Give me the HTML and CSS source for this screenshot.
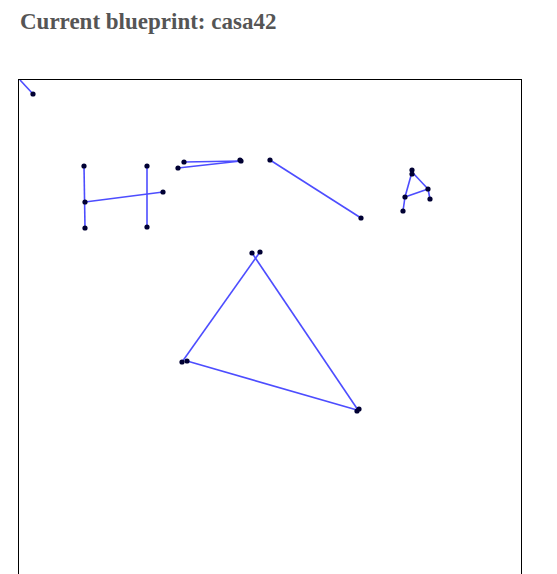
FILE: index.html
```html
<html><head><meta charset="UTF-8">
<meta name="viewport" content="width=device-width, initial-scale=1.0">
<title>Blueprint viewer</title>
<link rel="stylesheet" href="styles.css">
</head>
<body>
    <div class="viewer">
        <h2 class="title">Current blueprint: casa42</h2>
        <div class="board">
            <svg class="plan" width="500" height="500" viewBox="0 0 500 500" xmlns="http://www.w3.org/2000/svg">
                <g class="walls">
                    <line x1="1" y1="0" x2="14" y2="14"/>
                    <line x1="65" y1="86" x2="66" y2="148"/>
                    <line x1="128" y1="86" x2="128" y2="147"/>
                    <line x1="66" y1="122" x2="144" y2="112"/>
                    <line x1="165" y1="82" x2="222" y2="81"/>
                    <line x1="159" y1="88" x2="222" y2="81"/>
                    <line x1="251" y1="80" x2="342" y2="138"/>
                    <line x1="393" y1="92" x2="386" y2="117"/>
                    <line x1="386" y1="117" x2="384" y2="131"/>
                    <line x1="386" y1="117" x2="409" y2="109"/>
                    <line x1="393" y1="92" x2="409" y2="109"/>
                    <line x1="409" y1="109" x2="411" y2="119"/>
                    <line x1="163" y1="282" x2="241" y2="172"/>
                    <line x1="233" y1="173" x2="339" y2="330"/>
                    <line x1="168" y1="281" x2="338" y2="330"/>
                </g>
                <g class="joints">
                    <circle cx="14" cy="14" r="2.6"/>
                    <circle cx="65" cy="86" r="2.6"/>
                    <circle cx="66" cy="122" r="2.6"/>
                    <circle cx="66" cy="148" r="2.6"/>
                    <circle cx="128" cy="86" r="2.6"/>
                    <circle cx="128" cy="147" r="2.6"/>
                    <circle cx="144" cy="112" r="2.6"/>
                    <circle cx="165" cy="82" r="2.6"/>
                    <circle cx="159" cy="88" r="2.6"/>
                    <circle cx="222" cy="81" r="2.6"/>
                    <circle cx="221" cy="80" r="2.6"/>
                    <circle cx="251" cy="80" r="2.6"/>
                    <circle cx="342" cy="138" r="2.6"/>
                    <circle cx="393" cy="90" r="2.6"/>
                    <circle cx="393" cy="94" r="2.6"/>
                    <circle cx="386" cy="117" r="2.6"/>
                    <circle cx="384" cy="131" r="2.6"/>
                    <circle cx="409" cy="109" r="2.6"/>
                    <circle cx="411" cy="119" r="2.6"/>
                    <circle cx="233" cy="173" r="2.6"/>
                    <circle cx="241" cy="172" r="2.6"/>
                    <circle cx="163" cy="282" r="2.6"/>
                    <circle cx="168" cy="281" r="2.6"/>
                    <circle cx="338" cy="331" r="2.6"/>
                    <circle cx="340" cy="329" r="2.6"/>
                </g>
            </svg>
        </div>
    </div>
</body>
</html>
```

FILE: styles.css
```css
body {
    margin: 0;
    padding: 0;
    background-color: #FFFFFF;
    font-family: 'Liberation Serif', 'Times New Roman', serif;
}

.viewer {
    padding: 9px 18px;
}

.title {
    font-size: 23px;
    font-weight: bold;
    color: #555555;
    margin: 0 0 44px 2px;
}

.board {
    width: 502px;
    border: 1px solid #000000;
    height: 520px;
}

.plan {
    display: block;
}

.walls line {
    stroke: #4d4dff;
    stroke-width: 1.6;
}

.joints circle {
    fill: #000033;
}
```
